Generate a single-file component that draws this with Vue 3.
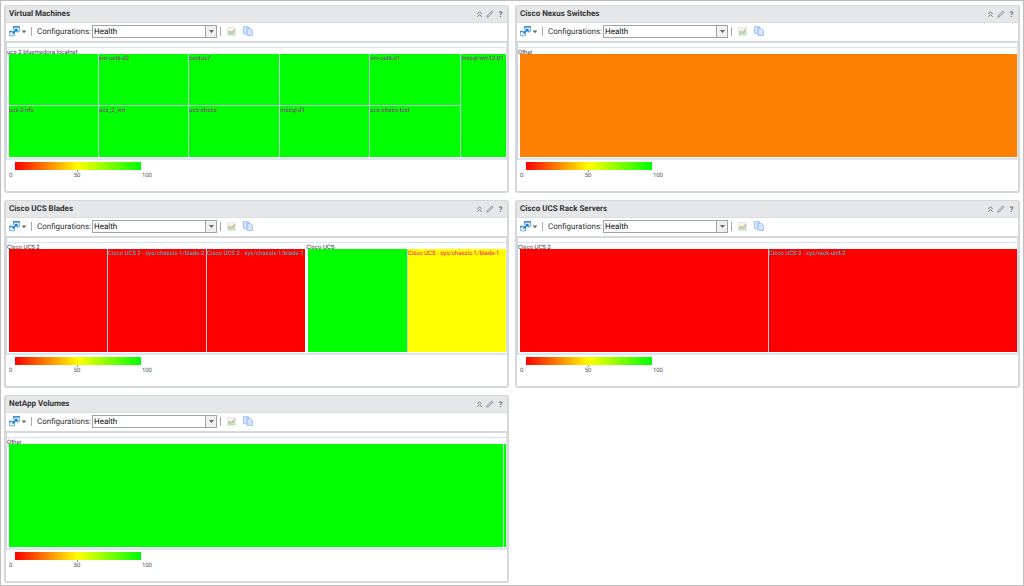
<script setup>
const panels = [
  {
    id: 'vm', title: 'Virtual Machines',
    groups: [{
      name: 'ucs-2.bluemedora.localnet', weight: 1, tone: 'purple', tint: 'green',
      columns: [
        { weight: 90, cells: ['', 'ucs-2-nfs'] },
        { weight: 90, cells: ['em-oel6-d2', 'ucs_2_vm'] },
        { weight: 91, cells: ['centos7', 'ucs-stress'] },
        { weight: 90, cells: ['', 'mssql-d1'] },
        { weight: 91, cells: ['em-oel6-d1', 'ucs-stress-test'] },
        { weight: 45, cells: ['mssql-win12-01'] }
      ]
    }]
  },
  {
    id: 'nexus', title: 'Cisco Nexus Switches',
    groups: [{ name: 'Other', weight: 1, tint: 'orange', columns: [{ weight: 1, cells: [''] }] }]
  },
  {
    id: 'blades', title: 'Cisco UCS Blades',
    groups: [
      {
        name: 'Cisco UCS 2', weight: 3, tone: 'teal', tint: 'red',
        columns: [
          { weight: 1, cells: [''] },
          { weight: 1, cells: ['Cisco UCS 2 - sys/chassis-1/blade-2'] },
          { weight: 1, cells: ['Cisco UCS 2 - sys/chassis-1/blade-1'] }
        ]
      },
      {
        name: 'Cisco UCS', weight: 2, tone: 'pink', tint: 'green',
        columns: [
          { weight: 1, cells: [''] },
          { weight: 1, cells: ['Cisco UCS - sys/chassis-1/blade-1'], tint: 'yellow' }
        ]
      }
    ]
  },
  {
    id: 'rack', title: 'Cisco UCS Rack Servers',
    groups: [{
      name: 'Cisco UCS 2', weight: 1, tone: 'teal', tint: 'red',
      columns: [{ weight: 1, cells: [''] }, { weight: 1, cells: ['Cisco UCS 2 - sys/rack-unit-2'] }]
    }]
  },
  {
    id: 'netapp', title: 'NetApp Volumes',
    groups: [{
      name: 'Other', weight: 1, tint: 'green',
      columns: [{ weight: 494, cells: [''] }, { weight: 2, cells: [''] }]
    }]
  }
]
</script>

<template>
  <main class="dashboard">
    <section v-for="p in panels" :key="p.id" class="panel">
      <header class="head">
        <h2>{{ p.title }}</h2>
        <button type="button" aria-label="Collapse">
          <svg width="7" height="8" viewBox="0 0 7 8"><path d="M1.300 4 3.500 1.800 5.700 4M1.300 6.800 3.500 4.600 5.700 6.800" fill="none" stroke="#77797b" /></svg>
        </button>
        <button type="button" aria-label="Edit">
          <svg width="8" height="8" viewBox="0 0 8 8"><path d="M.7 7.300 1.200 5.500 5.800.9 7.100 2.200 2.500 6.800Z" fill="#b5b7b9" stroke="#909294" stroke-width=".7" /><path d="M2 6 6 2" stroke="#dedfe0" stroke-width=".6" /></svg>
        </button>
        <button type="button" class="help" aria-label="Help">?</button>
      </header>
      <div class="toolbar">
        <button type="button" class="action" aria-label="Actions">
          <svg width="18" height="11" viewBox="0 0 18 11">
            <path d="M4.500.8h5.800v5H7.200M4.500.8v3" fill="#fff" stroke="#65a5df" />
            <path d="M4 .8h6.800" stroke="#3e8ad3" stroke-width="1.500" />
            <path d="M.7 5.500h4.800v4.300H.7z" fill="#f5faff" stroke="#73aadd" />
            <path d="M.2 5.500h2.500" stroke="#3788d8" stroke-width="1.500" />
            <path d="M3.500 7.500 7 4" stroke="#1478d8" stroke-width="1.700" />
            <path d="M5 2.700h3.600v3.600z" fill="#1478d8" />
            <path d="M12.600 4.500h4.800L15 7.200z" fill="#666" />
          </svg>
        </button>
        <span class="sep"></span>
        <label :for="'config-' + p.id">Configurations:</label>
        <div class="combo">
          <select :id="'config-' + p.id"><option>Health</option></select>
          <span class="arrow"><svg width="5" height="3" viewBox="0 0 5 3"><path d="M0 0h5L2.500 3z" fill="#666" /></svg></span>
        </div>
        <span class="sep near"></span>
        <button type="button" class="chart" aria-label="Show chart">
          <svg width="9" height="9" viewBox="0 0 9 9"><path d="M.5.5v8h8V.5z" fill="#f2f5ef" stroke="#d9dddc" stroke-width=".6" /><path d="M1 8V6.500l2-1 1.500 1 2-2L8 4v4z" fill="#c4e6bd" /><path d="m1 7 2-1.500 1.500.8L8 3.500" fill="none" stroke="#8fcb8c" stroke-width=".8" /><path d="m1 5.300 2-1 1.500 1L8 2" fill="none" stroke="#eda58f" /></svg>
        </button>
        <button type="button" aria-label="Copy">
          <svg width="10" height="10" viewBox="0 0 10 10"><path d="M.5.7h5v7h-5z" fill="#d6e6ff" stroke="#9fc1f6" /><path d="M4 2.500h3.500l1.900 1.900v5H4z" fill="#d6e6ff" stroke="#9fc1f6" /><path d="M4 1v6" stroke="#a9c9fa" /></svg>
        </button>
      </div>
      <div class="map">
        <div class="groups">
          <div v-for="(g, gi) in p.groups" :key="gi" class="group" :style="{ flexGrow: g.weight }">
            <h3>{{ g.name }}</h3>
            <div class="tiles">
              <div v-for="(c, ci) in g.columns" :key="ci" class="column" :style="{ flexGrow: c.weight }">
                <div v-for="(name, ni) in c.cells" :key="ni" class="tile" :class="[c.tint || g.tint, g.tone]">
                  <span>{{ name }}</span>
                </div>
              </div>
            </div>
          </div>
        </div>
      </div>
      <footer class="legend">
        <div class="ramp"></div>
        <div class="scale"><span>0</span><span>50</span><span>100</span></div>
      </footer>
    </section>
  </main>
</template>

<style>
body { background: #fff; }
</style>

<style scoped>
.dashboard {
  box-sizing: border-box;
  min-height: 100vh;
  padding: 4px 3px 2px;
  border: 1px solid #bfbfbf;
  display: grid;
  grid-template-columns: 1fr 1fr;
  align-content: start;
  gap: 7px 6px;
  font-family: Roboto, "Liberation Sans", Arial, sans-serif;
  font-size: 8px;
  color: #333;
  text-rendering: geometricPrecision;
}
.panel {
  border: 1px solid #d6d7d8;
  border-width: 1px 2px 2px;
  border-radius: 3px;
  min-width: 0;
}
.head {
  height: 16px;
  display: flex;
  align-items: center;
  gap: 3px;
  padding: 0 3px;
  background: #e6e7e9;
  border-bottom: 1px solid #dcddde;
}
h2 { margin: 0 auto 0 0; font-size: 8px; line-height: 10px; color: #333; }
h3 { margin: 0; font-weight: normal; }
button { border: 0; padding: 0; background: none; display: flex; color: inherit; font: inherit; text-rendering: inherit; }
.help { font-weight: bold; color: #6f7173; width: 7px; justify-content: center; }
.toolbar { box-sizing: border-box; height: 18px; display: flex; align-items: center; padding: 0 3px 2px; }
.sep { width: 1px; height: 9px; margin: 0 5px 0 4px; background: #aaa; }
.near { margin: 0 6px 0 3px; }
.chart { margin-right: 7px; }
label { width: 55px; white-space: nowrap; color: #333; }
.combo {
  display: flex;
  box-sizing: border-box;
  width: 125px;
  height: 13px;
  border: 1px solid #a3a3a3;
}
select {
  appearance: none;
  flex: 1;
  min-width: 0;
  border: 0;
  padding: 0 1px;
  background: #fff;
  color: #111;
  font: inherit;
  text-rendering: inherit;
}
.arrow {
  width: 10px;
  display: flex;
  align-items: center;
  justify-content: center;
  border-left: 1px solid #a3a3a3;
  background: #f0f0f0;
}
.map {
  border-top: 2px solid #d5d9dd;
  border-bottom: 2px solid #dbe6f1;
  border-right: 1px solid #dbe1e7;
  border-left: 1px solid #c5d8e9;
}
.groups { display: flex; gap: 1px; margin-top: 4px; border-top: 1px solid #d5e4f2; }
.group { flex: 1 1 0; min-width: 0; padding: 0 0 1px 2px; }
.group h3 {
  margin-left: -2px;
  height: 6px;
  line-height: 10px;
  font-size: 6px;
  white-space: nowrap;
}
.tiles { display: flex; gap: 1px; height: 103px; background: #bdd0dc; }
.column { flex: 1 1 0; min-width: 0; display: flex; flex-direction: column; gap: 1px; }
.tile {
  flex: 1;
  font-size: 6px;
  line-height: 10px;
  white-space: nowrap;
}
.green { background: #0f0; }
.orange { background: #ff8000; }
.red { background: #f00; }
.yellow { background: #ff0; }
.purple { color: #a8109e; }
.teal { color: #18c4d4; }
.pink { color: #f0007e; }
.legend { height: 31px; box-sizing: border-box; padding: 2px 9px 0; }
.ramp {
  width: 126px;
  height: 8px;
  background: linear-gradient(90deg, #f00, #ff0 50%, #0f0);
}
.scale {
  display: flex;
  justify-content: space-between;
  width: 143px;
  margin: 1px 0 0 -6px;
  font-size: 6px;
  line-height: 10px;
  color: #555;
}
.scale span:nth-child(2) { position: relative; }
.scale span:nth-child(2)::before {
  content: "";
  position: absolute;
  left: 50%;
  top: -1px;
  width: 1px;
  height: 2px;
  background: #999;
}
</style>
